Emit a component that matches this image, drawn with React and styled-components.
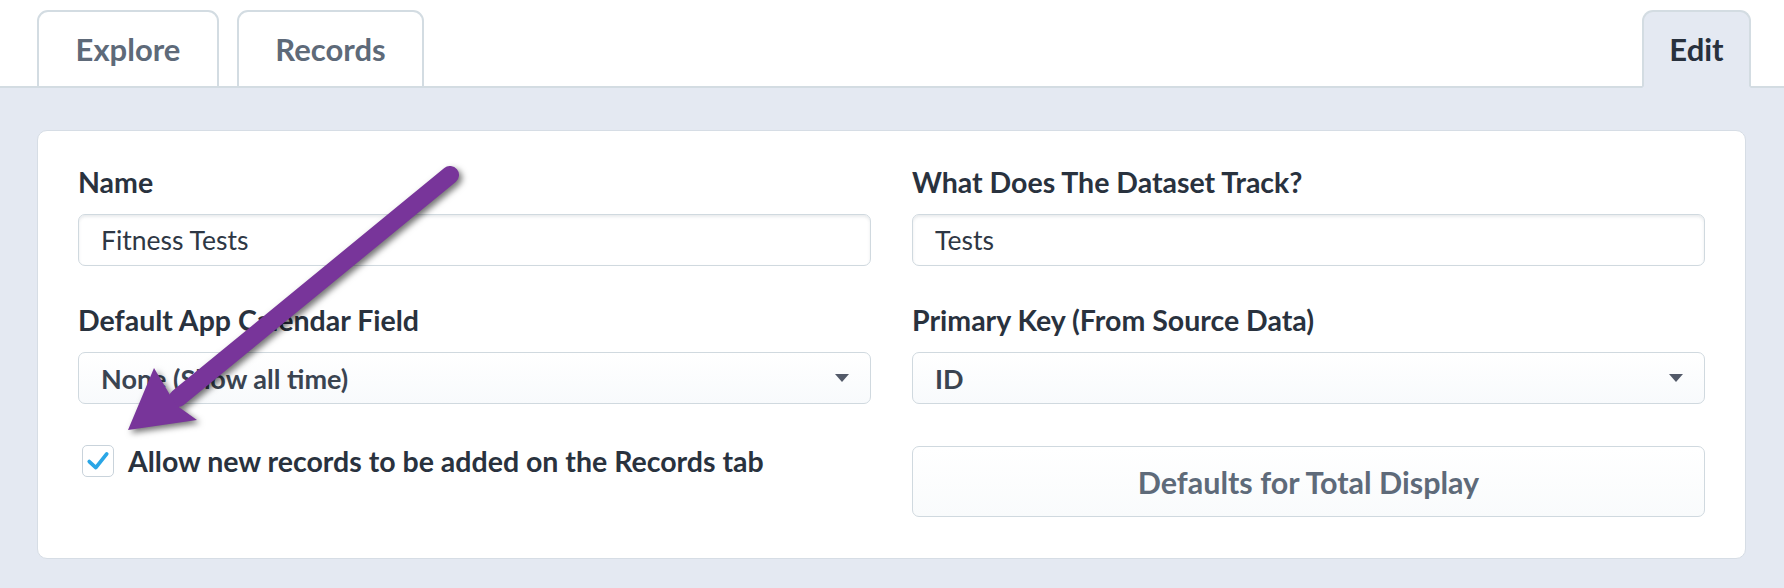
import styled, { createGlobalStyle } from 'styled-components'

const Global = createGlobalStyle`
  html, body { margin: 0; padding: 0; background: #fff; }
  body { font-family: Lato, "Open Sans", sans-serif; }
  * { box-sizing: border-box; }
`;

const Page = styled.div`
  position: relative;
  width: 1784px;
  height: 588px;
  overflow: hidden;
`;

const TabBar = styled.div`
  display: flex;
  align-items: flex-end;
  gap: 18px;
  height: 88px;
  padding: 10px 33px 0 37px;
  border-bottom: 2px solid #d3dce2;
  background: #fff;
`;

const Tab = styled.div`
  display: flex;
  align-items: center;
  justify-content: center;
  width: ${({ w }) => w}px;
  height: 78px;
  margin-bottom: -2px;
  margin-left: ${({ push }) => (push ? 'auto' : '0')};
  padding-bottom: 0;
  border: 2px solid #d3dce2;
  border-bottom: ${({ active }) => (active ? '2px solid #e4e9f2' : '2px solid #d3dce2')};
  border-radius: 11px 11px 0 0;
  background: ${({ active }) => (active ? '#e4e9f2' : '#fff')};
  color: ${({ active }) => (active ? '#28313d' : '#5e6a79')};
  font-size: 31px;
  font-weight: 700;
`;

const Content = styled.div`
  background: #e4e9f2;
  padding: 42px 38px 31px 37px;
`;

const Panel = styled.div`
  background: #fff;
  border: 1.5px solid #d6dde5;
  border-radius: 10px;
  padding: 35px 40px 41px 40px;
  display: grid;
  grid-template-columns: 1fr 1fr;
  column-gap: 41px;
  row-gap: 38px;
`;

const Field = styled.div`
  display: flex;
  flex-direction: column;
`;

const Label = styled.label`
  font-size: 28.5px;
  line-height: 32px;
  font-weight: 700;
  color: #29323e;
  margin-bottom: 16px;
`;

const Input = styled.div`
  height: 52px;
  display: flex;
  align-items: center;
  padding: 0 22px;
  border: 1.5px solid #d0d9df;
  border-radius: 7px;
  background: #fff;
  box-shadow: inset 0 2px 3px rgba(40, 60, 80, 0.1);
  font-size: 26.5px;
  color: #2e3744;
`;

const Select = styled.div`
  height: 52px;
  display: flex;
  align-items: center;
  justify-content: space-between;
  padding: 0 21px 0 22px;
  border: 1.5px solid #d0d9df;
  border-radius: 7px;
  background: linear-gradient(#fff, #f8fafc);
  font-size: 27px;
  font-weight: 700;
  color: #3a4451;
`;

const Caret = styled.span`
  width: 0;
  height: 0;
  border-left: 7.5px solid transparent;
  border-right: 7.5px solid transparent;
  border-top: 8px solid #535a69;
`;

const CheckRow = styled.label`
  display: flex;
  align-items: flex-start;
  gap: 14px;
  padding-left: 4px;
  margin-top: 3px;
  font-size: 28.5px;
  line-height: 32px;
  font-weight: 700;
  color: #29323e;
`;

const Box = styled.span`
  flex: none;
  width: 32px;
  height: 32px;
  border: 1.5px solid #c9d3db;
  border-radius: 5px;
  background: #fff;
  display: flex;
  align-items: center;
  justify-content: center;
`;

const Button = styled.div`
  height: 71px;
  margin-top: 4px;
  display: flex;
  align-items: center;
  justify-content: center;
  border: 1.5px solid #d0d9df;
  border-radius: 7px;
  background: linear-gradient(#fff, #f9fbfc);
  font-size: 30.5px;
  font-weight: 700;
  color: #5e6a79;
`;

const Overlay = styled.svg`
  position: absolute;
  left: 0;
  top: 0;
  pointer-events: none;
  filter: drop-shadow(3px 3px 3px rgba(0, 0, 0, 0.55));
`;

const Arrow = () => (
  <Overlay width="1784" height="588" viewBox="0 0 1784 588">
    <line x1="450" y1="175" x2="178" y2="398" stroke="#78359a" strokeWidth="18" strokeLinecap="round" />
    <polygon points="128,430 154,368 176,405 197,420" fill="#78359a" />
  </Overlay>
);

const Check = () => (
  <svg width="24" height="22" viewBox="0 0 22 20">
    <path d="M3 10.5 L9 16 L19 3.5" fill="none" stroke="#2aa6e6" strokeWidth="3.4" strokeLinecap="round" strokeLinejoin="round" />
  </svg>
);

const App = () => {
  return (
    <Page>
      <Global />
      <TabBar>
        <Tab w={182}>Explore</Tab>
        <Tab w={187}>Records</Tab>
        <Tab w={109} push active>Edit</Tab>
      </TabBar>
      <Content>
        <Panel>
          <Field>
            <Label>Name</Label>
            <Input>Fitness Tests</Input>
          </Field>
          <Field>
            <Label>What Does The Dataset Track?</Label>
            <Input>Tests</Input>
          </Field>
          <Field>
            <Label>Default App Calendar Field</Label>
            <Select>None (Show all time)<Caret /></Select>
          </Field>
          <Field>
            <Label>Primary Key (From Source Data)</Label>
            <Select>ID<Caret /></Select>
          </Field>
          <CheckRow>
            <Box><Check /></Box>
            Allow new records to be added on the Records tab
          </CheckRow>
          <Button>Defaults for Total Display</Button>
        </Panel>
      </Content>
      <Arrow />
    </Page>
  )
}

export default App
